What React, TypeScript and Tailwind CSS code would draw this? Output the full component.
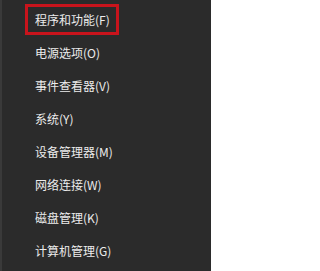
import React from "react";

const items = [
  "程序和功能(F)",
  "电源选项(O)",
  "事件查看器(V)",
  "系统(Y)",
  "设备管理器(M)",
  "网络连接(W)",
  "磁盘管理(K)",
  "计算机管理(G)",
];

export default function App() {
  return (
    <div
      className="w-[211px] h-[271px] bg-[#2b2b2b] border-l-2 border-[#3a3a3a] overflow-hidden pt-[3px]"
      style={{ fontFamily: '"Noto Sans CJK SC", "Noto Sans", sans-serif' }}
    >
      {items.map((t, i) => (
        <div key={t} className="h-[33px] flex items-center pl-[23px]">
          <div
            className={
              i === 0
                ? "h-[31px] flex items-center pl-[7px] pr-[6px] border-[3px] border-[#c8141c]"
                : "h-[31px] flex items-center pl-[10px] pr-[9px]"
            }
          >
            <span className="text-[12px] leading-none text-[#ececec] whitespace-nowrap">{t}</span>
          </div>
        </div>
      ))}
    </div>
  );
}
